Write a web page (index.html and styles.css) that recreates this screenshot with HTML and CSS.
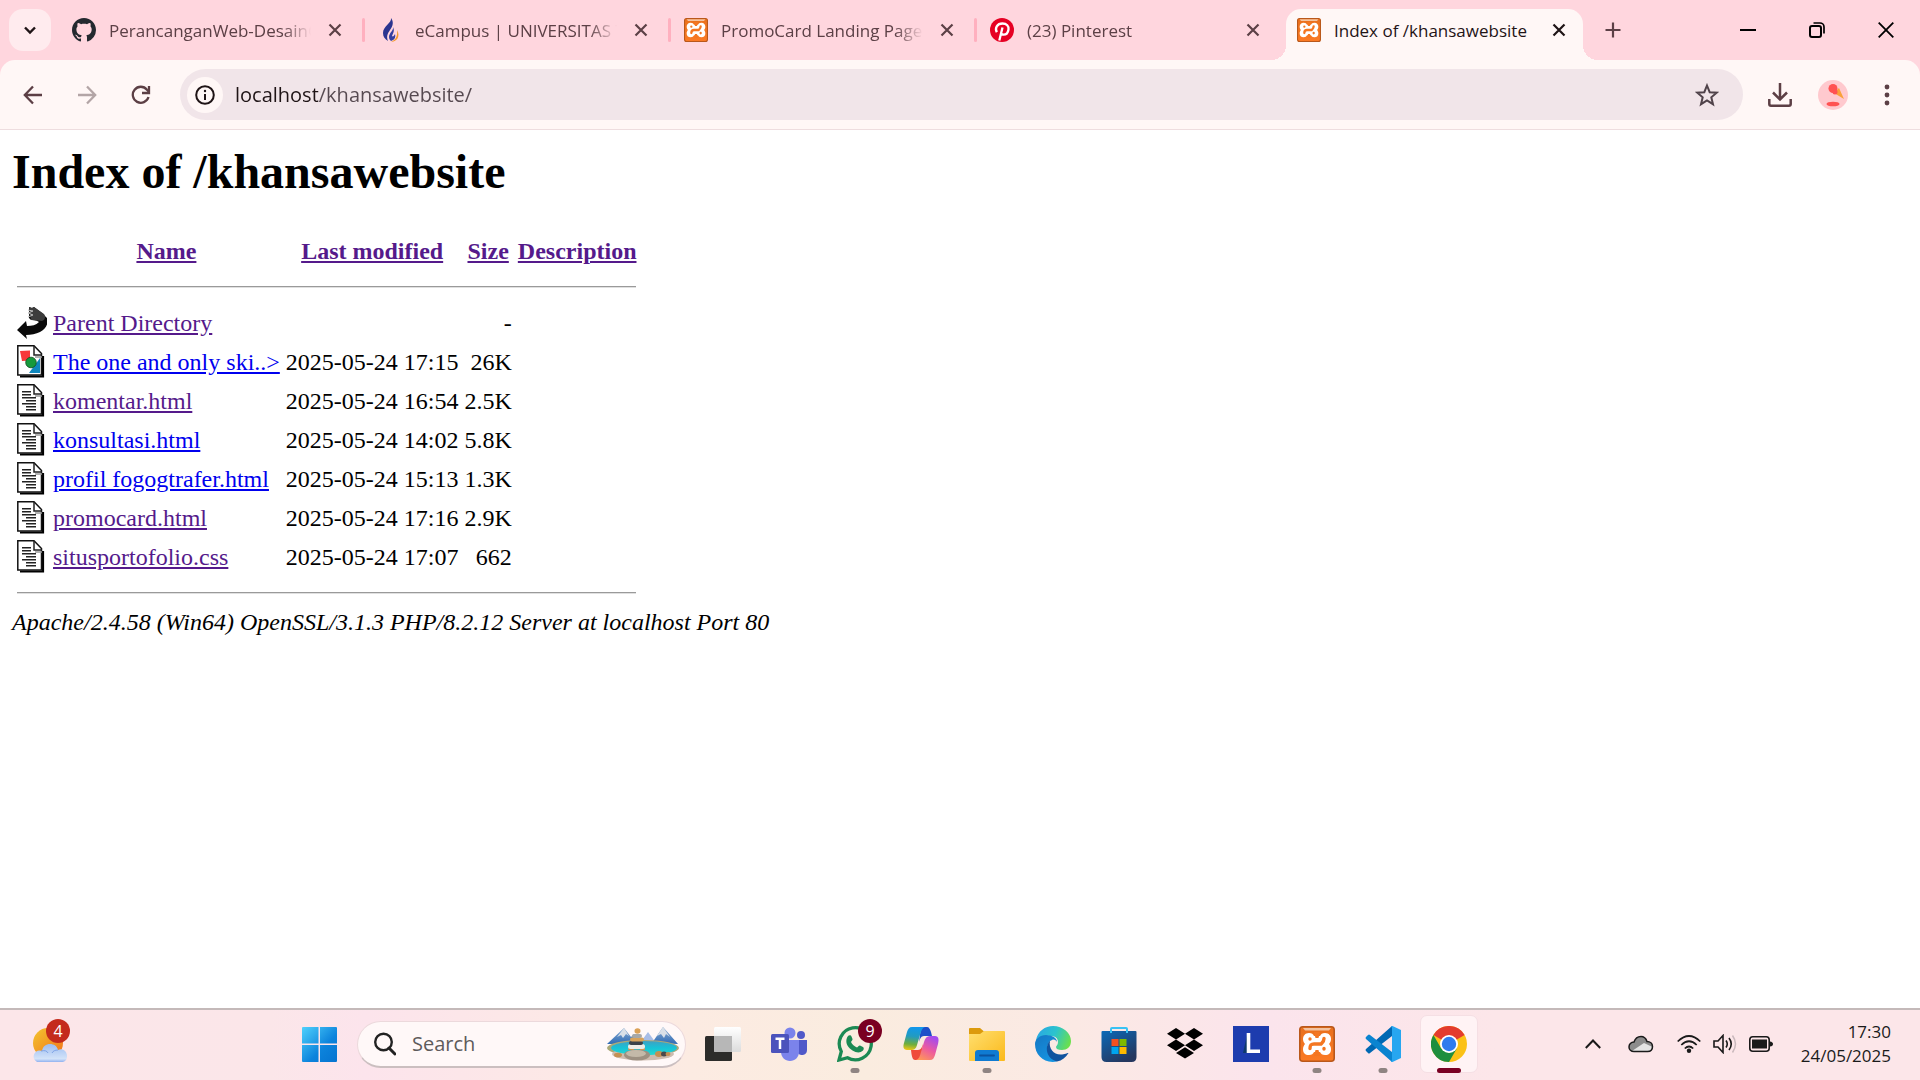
FILE: index.html
```html
<!DOCTYPE html>
<html lang="en">
<head>
<meta charset="utf-8">
<title>Index of /khansawebsite</title>
<link rel="stylesheet" href="styles.css">
</head>
<body>
<svg class="sprite" aria-hidden="true">
  <defs>
    <linearGradient id="xg" x1="0" y1="0" x2="0" y2="1"><stop offset="0" stop-color="#e9701d"/><stop offset="1" stop-color="#fb7a24"/></linearGradient>
  </defs>
  <symbol id="xampp" viewBox="0 0 36 36">
    <rect x=".8" y=".8" width="34.400" height="34.400" rx="3" fill="url(#xg)" stroke="#b9581b" stroke-width="1.600"/>
    <path d="M4 2h28l-2 2.500H6z" fill="#f3c3a0"/>
    <path d="M10 7c3 0 4 1 5 3h6c1-2 2-3 5-3 4 0 6 3 6 6 0 2-1 4-2 5 1 1 2 3 2 5 0 4-2 6-6 6-3 0-4-1-5-3h-6c-1 2-2 3-5 3-4 0-6-2-6-6 0-2 1-4 2-5-1-1-2-3-2-5 0-3 2-6 6-6z" fill="#fff"/>
    <path d="M15 6h6l-1.500 6h-3zM15 30h6l-1.500-6h-3z" fill="#f47621"/>
    <path d="M11 13v.1M25 12.500c0 3-1 3.500-3 5.500h-7c-3 0-4 1-4 4.500M25 22.500v.5" fill="none" stroke="#f47621" stroke-width="3.400" stroke-linecap="round"/>
  </symbol>
  <symbol id="close" viewBox="0 0 24 24">
    <path d="M6.500 6.500l11 11M17.500 6.500l-11 11" fill="none" stroke="currentColor" stroke-width="2.200"/>
  </symbol>
  <symbol id="doc" viewBox="0 0 30 33">
    <path d="M3 31.500h23V11" fill="none" stroke="#000" stroke-width="2.200"/>
    <path d="M.8.8h16.200L24.500 8.500V30H.8z" fill="#fff" stroke="#111" stroke-width="1.500"/>
    <path d="M17 1v9h8" fill="none" stroke="#222" stroke-width="1.500"/>
    <path d="M18 12h7" stroke="#999" stroke-width="1.500"/>
  </symbol>
  <symbol id="text" viewBox="0 0 30 33">
    <use href="#doc"/>
    <path d="M5 7.700h9M5 10.700h9M5 13.700h14M9 16.700h10M5 19.700h14M9 22.700h10M9 25.700h10" stroke="#222" stroke-width="1.500"/>
  </symbol>
</svg>

<header class="browser">
  <div class="tabstrip">
    <button class="tab-search" aria-label="Search tabs"><svg width="14" height="14" viewBox="0 0 14 14"><path d="M2 4.500l5 5 5-5" fill="none" stroke="#1f1416" stroke-width="2.400"/></svg></button>
    <nav class="tabs">
      <div class="tab">
        <svg class="favicon" viewBox="0 0 16 16"><path fill="#24292f" d="M8 0C3.580 0 0 3.580 0 8c0 3.540 2.290 6.530 5.470 7.590.4.070.55-.17.55-.38 0-.19-.01-.82-.01-1.490-2.010.37-2.530-.49-2.690-.94-.09-.23-.48-.94-.82-1.130-.28-.15-.68-.52-.01-.53.63-.01 1.080.58 1.230.82.72 1.210 1.870.87 2.330.66.07-.52.28-.87.51-1.070-1.780-.2-3.640-.89-3.640-3.950 0-.87.31-1.590.82-2.150-.08-.2-.36-1.020.08-2.120 0 0 .67-.21 2.200.82.64-.18 1.320-.27 2-.27s1.360.09 2 .27c1.530-1.040 2.200-.82 2.200-.82.44 1.100.16 1.920.08 2.120.51.56.82 1.270.82 2.150 0 3.070-1.870 3.750-3.650 3.950.29.25.54.73.54 1.480 0 1.070-.01 1.930-.01 2.200 0 .21.15.46.55.38A8.010 8.010 0 0 0 16 8c0-4.420-3.580-8-8-8z"/></svg>
        <a class="title" href="#">PerancanganWeb-DesainG</a>
        <button class="close" aria-label="Close tab"><svg><use href="#close"/></svg></button>
      </div>
      <div class="tab">
        <svg class="favicon" viewBox="0 0 24 24"><path d="M13 0c1 5-8 8-8 15 0 4 2 6 5 8-2-5 0-8 2-11 3-4 4-8 1-12z" fill="#2b3590"/><path d="M15 9c1 3-4 6-4 10 0 2 1 3 2 4 3-1 5-3 4-7-1 2-2 3-3 2 1-3 3-5 1-9z" fill="#3440a0"/><path d="M19 12c4 7-1 12-6 12 4-2 7-5 6-12z" fill="#f39a2b"/></svg>
        <a class="title" href="#">eCampus | UNIVERSITAS T</a>
        <button class="close" aria-label="Close tab"><svg><use href="#close"/></svg></button>
      </div>
      <div class="tab">
        <svg class="favicon"><use href="#xampp"/></svg>
        <a class="title" href="#">PromoCard Landing Page</a>
        <button class="close" aria-label="Close tab"><svg><use href="#close"/></svg></button>
      </div>
      <div class="tab last">
        <svg class="favicon" viewBox="0 0 24 24"><circle cx="12" cy="12" r="12" fill="#e60023"/><path d="M6.800 14.200C4.600 10.300 7 5.500 12.500 5.500c4.200 0 6.500 2.700 6 6-.5 3.300-2.600 5.200-4.900 5.200-1.500 0-2.400-1-2.500-1.700M12.500 9.500L9.300 22.500" fill="none" stroke="#fff" stroke-width="2.300"/></svg>
        <a class="title" href="#">(23) Pinterest</a>
        <button class="close" aria-label="Close tab"><svg><use href="#close"/></svg></button>
      </div>
      <div class="tab active">
        <svg class="favicon"><use href="#xampp"/></svg>
        <a class="title" href="#">Index of /khansawebsite</a>
        <button class="close" aria-label="Close tab"><svg><use href="#close"/></svg></button>
      </div>
      <button class="new-tab" aria-label="New tab"><svg width="18" height="18" viewBox="0 0 18 18"><path d="M9 1.500v15M1.500 9h15" stroke="#5c4046" stroke-width="2.200"/></svg></button>
    </nav>
    <div class="window-controls">
      <button aria-label="Minimize"><svg width="16" height="16" viewBox="0 0 16 16"><path d="M0 8h16" stroke="#000" stroke-width="2"/></svg></button>
      <button aria-label="Restore"><svg width="16" height="16" viewBox="0 0 16 16"><rect x="1" y="4" width="11" height="11" rx="2" fill="none" stroke="#000" stroke-width="2"/><path d="M4.500 1H11a4 4 0 0 1 4 4v6.500" fill="none" stroke="#000" stroke-width="1.700"/></svg></button>
      <button aria-label="Close window"><svg width="16" height="16" viewBox="0 0 16 16"><path d="M.7.700l14.600 14.600M15.300.700L.7 15.300" stroke="#000" stroke-width="1.800"/></svg></button>
    </div>
  </div>

  <div class="toolbar">
    <button class="nav-btn" aria-label="Back"><svg width="20" height="20" viewBox="0 0 20 20"><path d="M19 10H2M10 1.500L1.800 10l8.200 8.500" fill="none" stroke="#5c3f45" stroke-width="2.300"/></svg></button>
    <button class="nav-btn" aria-label="Forward"><svg width="20" height="20" viewBox="0 0 20 20"><path d="M1 10h17M10 1.500l8.200 8.500-8.200 8.500" fill="none" stroke="#b3a5a6" stroke-width="2.300"/></svg></button>
    <button class="nav-btn" aria-label="Reload"><svg width="20" height="20" viewBox="0 0 20 20"><path d="M17.500 12A8 8 0 1 1 16 4.700l2 2.300" fill="none" stroke="#5c3f45" stroke-width="2.300"/><path d="M18 1v7h-7" fill="none" stroke="#5c3f45" stroke-width="2.300"/></svg></button>
    <div class="omnibox">
      <button class="site-info" aria-label="Site information"><svg width="20" height="20" viewBox="0 0 20 20"><circle cx="10" cy="10" r="8.800" fill="none" stroke="#1f1416" stroke-width="2"/><path d="M10 9v6" stroke="#1f1416" stroke-width="2"/><circle cx="10" cy="6" r="1.200" fill="#1f1416"/></svg></button>
      <input class="address" type="text" aria-label="Address" value="localhost/khansawebsite/">
      <button class="star" aria-label="Bookmark this page"><svg width="24" height="24" viewBox="0 0 24 24"><path d="M12 2.500l2.700 6.700 7 .5-5.400 4.600 1.700 6.900-6-3.800-6 3.800 1.700-6.900-5.400-4.600 7-.5z" fill="none" stroke="#50434a" stroke-width="2"/></svg></button>
    </div>
    <button class="download" aria-label="Downloads"><svg width="24" height="24" viewBox="0 0 24 24"><path d="M12 0v16M5 9.500l7 7 7-7M1.300 16v5c0 1 .7 1.700 1.700 1.700h18c1 0 1.700-.7 1.700-1.700v-5" fill="none" stroke="#5c3f45" stroke-width="2.500"/></svg></button>
    <button class="profile" aria-label="Profile"><svg width="30" height="30" viewBox="0 0 30 30"><circle cx="15" cy="15" r="15" fill="#ffc9ce"/><path d="M16 13l5-5 5 11z" fill="#f9a13a"/><circle cx="15" cy="8.500" r="4.500" fill="#ff5252"/><circle cx="17" cy="12" r="2.500" fill="#ff5252"/><ellipse cx="15" cy="24" rx="6.500" ry="2.300" fill="#ff5252"/></svg></button>
    <button class="menu" aria-label="Menu"><svg width="6" height="22" viewBox="0 0 6 22"><g fill="#5c3f45"><circle cx="3" cy="3" r="2.400"/><circle cx="3" cy="11" r="2.400"/><circle cx="3" cy="19" r="2.400"/></g></svg></button>
  </div>
</header>

<main class="page">
  <h1>Index of /khansawebsite</h1>
  <table class="listing">
    <thead>
      <tr class="head"><th></th><th><a class="visited" href="#">Name</a></th><th><a class="visited" href="#">Last modified</a></th><th><a class="visited" href="#">Size</a></th><th><a class="visited" href="#">Description</a></th></tr>
      <tr><th colspan="5"><hr></th></tr>
    </thead>
    <tbody>
      <tr><td><svg class="file" viewBox="0 0 30 33"><path d="M12 1l3 1 2-1 8 6 5 5c2 5-1 11-7 14-4 2-9 3-14 3l1 4L0 24l9-9 1 5c5 0 9-1 12-4-3-2-6-2-8-2l-2-2z" fill="#0a0a0a"/><path d="M12 1l3 1 2-1 10 7c2 3 1 6-2 7-3 0-7-1-11-1z" fill="#3c3c3c"/><path d="M11 4l5 1-5 2 5 2-5 2" fill="none" stroke="#bbb" stroke-width="1"/></svg></td><td><a class="visited" href="#">Parent Directory</a></td><td></td><td class="num">-</td><td></td></tr>
      <tr><td><svg class="file" viewBox="0 0 30 33"><use href="#doc"/><path d="M3 6l10-.5v10L5 16z" fill="#f8383a"/><path d="M23 13v15H12z" fill="#0f87bd"/><circle cx="14" cy="17.500" r="5.300" fill="#169a3c" stroke="#124a20" stroke-width=".8"/></svg></td><td><a href="#">The one and only ski..&gt;</a></td><td class="num">2025-05-24 17:15</td><td class="num">26K</td><td></td></tr>
      <tr><td><svg class="file"><use href="#text"/></svg></td><td><a class="visited" href="#">komentar.html</a></td><td class="num">2025-05-24 16:54</td><td class="num">2.5K</td><td></td></tr>
      <tr><td><svg class="file"><use href="#text"/></svg></td><td><a href="#">konsultasi.html</a></td><td class="num">2025-05-24 14:02</td><td class="num">5.8K</td><td></td></tr>
      <tr><td><svg class="file"><use href="#text"/></svg></td><td><a href="#">profil fogogtrafer.html</a></td><td class="num">2025-05-24 15:13</td><td class="num">1.3K</td><td></td></tr>
      <tr><td><svg class="file"><use href="#text"/></svg></td><td><a class="visited" href="#">promocard.html</a></td><td class="num">2025-05-24 17:16</td><td class="num">2.9K</td><td></td></tr>
      <tr><td><svg class="file"><use href="#text"/></svg></td><td><a class="visited" href="#">situsportofolio.css</a></td><td class="num">2025-05-24 17:07</td><td class="num">662</td><td></td></tr>
      <tr class="foot"><th colspan="5"><hr></th></tr>
    </tbody>
  </table>
  <address>Apache/2.4.58 (Win64) OpenSSL/3.1.3 PHP/8.2.12 Server at localhost Port 80</address>
</main>

<footer class="taskbar">
  <div class="widgets">
    <button class="app" aria-label="Weather">
      <svg width="36" height="36" viewBox="0 0 36 36"><defs><linearGradient id="sun" x1="0" y1="0" x2="1" y2="1"><stop offset="0" stop-color="#f3c52f"/><stop offset="1" stop-color="#f1701a"/></linearGradient><linearGradient id="cl" x1="0" y1="0" x2="0" y2="1"><stop offset="0" stop-color="#9cbcf0"/><stop offset=".8" stop-color="#d3e3f9"/><stop offset="1" stop-color="#87aaee"/></linearGradient></defs><circle cx="17" cy="17" r="15" fill="url(#sun)"/><path d="M11 36a6 6 0 1 1 0-11c1-5 4-7 8-7s7 2 8 6c4-2 9 1 9 6 0 4-2 6-6 6z" fill="url(#cl)"/><path d="M10 25c4-1 6 0 7 2M27 24c-3 0-5 1-6 3" fill="none" stroke="#7fa3e6"/></svg>
      <span class="badge red">4</span>
    </button>
  </div>
  <nav class="apps">
    <button class="app" aria-label="Start"><svg width="36" height="36" viewBox="0 0 36 36"><defs><linearGradient id="win" gradientUnits="userSpaceOnUse" x1="1" y1="1" x2="36" y2="36"><stop offset="0" stop-color="#4fd1fc"/><stop offset=".6" stop-color="#0c83dc"/><stop offset="1" stop-color="#0574d0"/></linearGradient></defs><path d="M2 1h15.500v16.500H1V2q0-1 1-1zM19 1h16q1 0 1 1v15.500H19zM1 19h16.500v17H2q-1 0-1-1zM19 19h17v16q0 1-1 1H19z" fill="url(#win)"/></svg></button>
    <label class="search">
      <svg width="22" height="24" viewBox="0 0 22 24"><circle cx="9.500" cy="10" r="8.300" fill="none" stroke="#222" stroke-width="2.400"/><path d="M15 16l6 6" stroke="#222" stroke-width="3" stroke-linecap="round"/></svg>
      <input type="search" aria-label="Search" placeholder="Search">
      <svg width="74" height="36" viewBox="0 0 74 36">
        <defs><linearGradient id="mt" x1="0" y1="0" x2="0" y2="1"><stop offset="0" stop-color="#8fb0d3"/><stop offset="1" stop-color="#2f6bb5"/></linearGradient><linearGradient id="lk" x1="0" y1="0" x2="0" y2="1"><stop offset="0" stop-color="#3fa0c4"/><stop offset=".5" stop-color="#16c3d6"/><stop offset="1" stop-color="#28d6cf"/></linearGradient></defs>
        <path d="M34 17l8-11 8 11z" fill="#a8bde6"/><path d="M1 18L18 2l7 9 3-3 6 10zM46 17L57 1l15 17z" fill="url(#mt)"/><path d="M18 2l-7 9 4-2 2 3 3-4 3 2zM57 1l-6 9 4-2 3 4 2-4 4 3z" fill="#d9e0e8"/>
        <ellipse cx="37" cy="22" rx="36" ry="8" fill="#a9a878"/><ellipse cx="37" cy="28" rx="31" ry="6.500" fill="#cdbcb0"/><ellipse cx="38" cy="22" rx="33" ry="7" fill="url(#lk)"/>
        <ellipse cx="31" cy="29" rx="13" ry="5.500" fill="#9d9081"/><ellipse cx="30" cy="27.500" rx="10" ry="3.500" fill="#c4b9a8"/><path d="M22 24q0-3 3-3h3v3zM34 24v-3h3q2 0 2 3z" fill="#d19552"/><rect x="22" y="18" width="17" height="5" rx="2.500" fill="#f0ece6"/><rect x="23" y="15" width="14" height="4" rx="2" fill="#3c4149"/><rect x="24" y="11.500" width="14" height="4" rx="2" fill="#d9a35c"/><rect x="26" y="8" width="10" height="4" rx="2" fill="#a7a8a8"/><ellipse cx="31.500" cy="5" rx="3" ry="2.800" fill="#dba157"/>
        <ellipse cx="12" cy="29" rx="4" ry="2.300" fill="#c49053"/><ellipse cx="53" cy="28" rx="4" ry="3" fill="#c49053"/><ellipse cx="58" cy="28" rx="3" ry="2.500" fill="#4a4a4c"/><ellipse cx="62" cy="28" rx="2.500" ry="2" fill="#c49053"/>
      </svg>
    </label>
    <button class="app" aria-label="Task view"><svg width="36" height="36" viewBox="0 0 36 36"><defs><linearGradient id="tv" x1="0" y1="0" x2="0" y2="1"><stop offset="0" stop-color="#fff"/><stop offset="1" stop-color="#dcdcdc"/></linearGradient></defs><rect y="10" width="27" height="25" rx="1.500" fill="#2c2c2a"/><rect x="9" y="1" width="27" height="25" rx="1.500" fill="url(#tv)"/><path d="M9 10h18v16H10.500q-1.500 0-1.500-1.500z" fill="#b7b7b7"/></svg></button>
    <button class="app" aria-label="Teams"><svg width="36" height="36" viewBox="0 0 36 36"><circle cx="30" cy="9" r="4" fill="#5059c9"/><path d="M26 14h10v10c0 4-3 5-5 5s-5-1-5-5z" fill="#5059c9"/><circle cx="19" cy="7" r="5.500" fill="#7b83eb"/><path d="M10 14h18v12c0 5-4 9-9 9s-9-4-9-9z" fill="#7b83eb"/><rect y="8" width="18" height="19" rx="1.500" fill="#4b53bc"/><path d="M4.500 12.800h9M9 12.800V23" stroke="#fff" stroke-width="2.500"/></svg></button>
    <button class="app running" aria-label="WhatsApp"><svg width="36" height="36" viewBox="0 0 36 36"><path d="M2 34l2.300-8.500A16 16 0 1 1 10.500 31.700z" fill="none" stroke="#1b8a54" stroke-width="3.300"/><path d="M11 10c1-1 3-1 3.500.5l1 2.500c.3 1-1 2-1.500 3 1 2.500 3.500 4.500 6 5.500 1-.7 2-2.300 3-2l3 1.500c1.200.7.800 2.500 0 3.500-2 2-4.500 2.500-7.500 1.500-4-1.500-8-5-9-9-.5-2.500 0-5.500 1.500-7z" fill="#1b8a54"/></svg><span class="badge wine">9</span></button>
    <button class="app" aria-label="Copilot"><svg width="36" height="36" viewBox="0 0 36 36"><defs><linearGradient id="c1" x1=".4" y1="0" x2=".3" y2="1"><stop offset="0" stop-color="#1197ec"/><stop offset=".4" stop-color="#229bc0"/><stop offset=".75" stop-color="#70ae3c"/><stop offset="1" stop-color="#eec617"/></linearGradient><linearGradient id="c2" x1=".7" y1="0" x2=".2" y2="1"><stop offset="0" stop-color="#a24bf0"/><stop offset=".5" stop-color="#ec5aa0"/><stop offset="1" stop-color="#ff9856"/></linearGradient></defs><path d="M18 1h6c2 0 3 2 4 5l1 4h-8c-3 0-4 3-5 6z" fill="#1c4fc9"/><path d="M18 34h-6c-2 0-3-3-3.500-6L8 24h7c3 0 4-3 5-6z" fill="#ef4b3a"/><path d="M9 1h13c-3 1-4 4-5 8l-3 10c-1 4-3 5-6 5H4c-4 0-4-4-3-7l3-11c1-3 2-5 5-5z" fill="url(#c1)"/><path d="M27 34H13c3-1 4-4 5-8l3-10c1-4 3-6 6-6h5c4 0 4 4 3 8l-3 11c-1 3-2 5-5 5z" fill="url(#c2)"/></svg></button>
    <button class="app running" aria-label="File Explorer"><svg width="36" height="36" viewBox="0 0 36 36"><defs><linearGradient id="fo" x1="0" y1="0" x2="1" y2="1"><stop offset="0" stop-color="#ffdf70"/><stop offset="1" stop-color="#fbb91a"/></linearGradient></defs><path d="M0 3q0-1 1-1h10l4 3.500h20v6H0z" fill="#dc9a0c"/><path d="M0 8h11l4-3h20q1 0 1 1v28q0 1-1 1H1q-1 0-1-1z" fill="url(#fo)"/><path d="M6 35V27q0-3 3-3h18q3 0 3 3v8z" fill="#0f7bd2"/><path d="M11 29.500h14" stroke="#0b539f" stroke-width="1.800" stroke-linecap="round"/></svg></button>
    <button class="app" aria-label="Edge"><svg width="36" height="36" viewBox="0 0 36 36"><defs><linearGradient id="e1" x1="0" y1=".3" x2="1" y2=".6"><stop offset="0" stop-color="#29a8e4"/><stop offset=".5" stop-color="#2cc3cd"/><stop offset="1" stop-color="#6be04b"/></linearGradient><linearGradient id="e2" x1="0" y1="0" x2=".6" y2="1"><stop offset="0" stop-color="#1577c4"/><stop offset="1" stop-color="#1593e0"/></linearGradient></defs><path d="M1 14C3 5 10 0 18 0c10 0 18 7 18 15 0 6-4 9-9 9-4 0-6-1-6-3 0-1 2-2 2-5 0-4-3-6-8-6C8 9 2 13 1 18z" fill="url(#e1)"/><path d="M0 18c0-5 5-9 11-9 6 0 11 3 11 7-1-2-3-3-5-2-6 2-8 15 5 21.500C9 38 0 29 0 18z" fill="url(#e2)"/><path d="M15 15c-5 4-5 17 7 20.500 5-1 9-4 11.500-8.500-1-.5-3 1.500-8 1.500-7 0-12-6-10.500-13.500z" fill="#10539f"/></svg></button>
    <button class="app" aria-label="Microsoft Store"><svg width="36" height="36" viewBox="0 0 36 36"><defs><linearGradient id="st" x1="0" y1="0" x2=".6" y2="1"><stop offset="0" stop-color="#0a69b8"/><stop offset="1" stop-color="#25375f"/></linearGradient></defs><path d="M.5 6q0-1 1-1h33q1 0 1 1v25q0 5-5 5h-25q-5 0-5-5z" fill="url(#st)"/><path d="M10 7V3q0-1 1-1h14q1 0 1 1v4" fill="none" stroke="#38c2f4" stroke-width="2"/><path d="M10.500 13h7v7h-7z" fill="#f25022"/><path d="M18.500 13h7v7h-7z" fill="#7fba00"/><path d="M10.500 21h7v7h-7z" fill="#00a4ef"/><path d="M18.500 21h7v7h-7z" fill="#ffb900"/></svg></button>
    <button class="app" aria-label="Dropbox"><svg width="36" height="36" viewBox="0 0 36 36"><path d="M9 2l9 5.700-9 5.700-9-5.700zM27 2l9 5.700-9 5.700-9-5.700zM9 13.500l9 5.700-9 5.700-9-5.700zM27 13.500l9 5.700-9 5.700-9-5.700zM18 21.200l9 5.700-9 5.600-9-5.600z" fill="#000"/></svg></button>
    <button class="app" aria-label="L"><svg width="36" height="36" viewBox="0 0 36 36"><path d="M0 0h36v36H0z" fill="#1d3cae"/><path d="M14 9l-4 18h8z" fill="#0d3a6b"/><path d="M15.500 7v18.300H27" fill="none" stroke="#fff" stroke-width="3.600"/></svg></button>
    <button class="app running" aria-label="XAMPP"><svg width="36" height="36"><use href="#xampp"/></svg></button>
    <button class="app running" aria-label="Visual Studio Code"><svg width="36" height="36" viewBox="0 0 36 36"><path d="M27 0v10L5 27q-1 1-2 0l-2-2q-1-1 0-2z" fill="#0068b3"/><path d="M27 36V26L5 9Q4 8 3 9l-2 2q-1 1 0 2z" fill="#0a84d0"/><path d="M26 0h1.500L36 4v28l-8.500 4H26l1-2V2z" fill="#27a6f0"/></svg></button>
    <button class="app running current" aria-label="Google Chrome"><svg width="36" height="36" viewBox="0 0 36 36"><circle cx="18" cy="18" r="18" fill="#fbc116"/><path d="M18 18L2.400 9A18 18 0 0 1 33.600 9z" fill="#e33b2e"/><path d="M2.400 9l7.800 13.500 7.800 4.500 7.800-4.500L18 36A18 18 0 0 1 2.400 9z" fill="#1e8e3e"/><circle cx="18" cy="18" r="9" fill="#fff"/><circle cx="18" cy="18" r="7.200" fill="#2f7bee"/></svg></button>
  </nav>
  <div class="tray">
    <button aria-label="Show hidden icons"><svg width="16" height="10" viewBox="0 0 16 10"><path d="M.8 9L8 1.500 15.200 9" fill="none" stroke="#1a1a1a" stroke-width="2"/></svg></button>
    <button aria-label="OneDrive"><svg width="26" height="18" viewBox="0 0 26 18"><path d="M6 16.500c-3 0-5-2-5-4.500C1 9.500 3 7 6 7c1-3 3-5.500 7-5.500 3 0 5 2 6 5 3 0 5.500 2 5.500 5s-2 5-5 5z" fill="#8c8c8c"/><path d="M4 16l12-8 8.500 4c0 3-2 4.500-5 4.500H6z" fill="#e4e4e4"/><path d="M6 16.500c-3 0-5-2-5-4.500C1 9.500 3 7 6 7c1-3 3-5.500 7-5.500 3 0 5 2 6 5 3 0 5.500 2 5.500 5s-2 5-5 5z" fill="none" stroke="#1a1a1a" stroke-width="1.500"/></svg></button>
    <button class="status" aria-label="Network, volume and battery">
      <svg width="24" height="18" viewBox="0 0 24 18"><g fill="none" stroke="#1a1a1a" stroke-width="1.700"><path d="M.7 6.500q11.300-11 22.600 0"/><path d="M4.300 10q7.700-7.500 15.400 0"/><path d="M7.800 13.500q4.200-4 8.400 0"/></g><circle cx="12" cy="15.700" r="2.200" fill="#1a1a1a"/></svg>
      <svg width="24" height="20" viewBox="0 0 24 20"><path d="M1 7h4l5-5.500v17L5 13H1z" fill="none" stroke="#1a1a1a" stroke-width="1.600"/><path d="M13 6.500q2.500 3.500 0 7M16 4q4.500 6 0 12" fill="none" stroke="#1a1a1a" stroke-width="1.600"/><path d="M19.500 1.500q6 8.500 0 17" fill="none" stroke="#c9b8bc" stroke-width="1.500"/></svg>
      <svg width="24" height="16" viewBox="0 0 24 16"><rect x=".8" y=".8" width="19.400" height="14.400" rx="3" fill="none" stroke="#1a1a1a" stroke-width="1.600"/><rect x="3" y="3.500" width="15" height="9" fill="#1a1a1a"/><path d="M21 5.500q3 .5 3 2.500t-3 2.500z" fill="#1a1a1a"/></svg>
    </button>
    <button class="clock"><time>17:30</time><time>24/05/2025</time></button>
  </div>
</footer>
</body>
</html>
```
FILE: styles.css
```css
* { box-sizing: border-box; }

body {
  margin: 0;
  min-height: 100vh;
  display: flex;
  flex-direction: column;
  background: #fff;
  font-family: "Open Sans", "Noto Sans", sans-serif;
}

button {
  margin: 0;
  padding: 0;
  border: 0;
  background: none;
  font: inherit;
  color: inherit;
  display: flex;
  align-items: center;
  justify-content: center;
  flex: none;
}

svg { display: block; flex: none; }
.sprite { position: absolute; width: 0; height: 0; }

/* Tab strip */
.browser { background: #ffd6de; }

.tabstrip {
  display: flex;
  height: 60px;
  padding-left: 9px;
}

.tab-search {
  width: 42px;
  height: 42px;
  margin-top: 9px;
  border-radius: 14px;
  background: #ffebee;
}

.tabs {
  display: flex;
  flex: 1;
  min-width: 0;
  padding-left: 8px;
}

.tab {
  display: flex;
  align-items: center;
  flex: 0 1 306px;
  min-width: 0;
  height: 60px;
  padding: 0 18px 0 13px;
  color: #5c4046;
  position: relative;
}

.tab:not(.last):not(.active)::after {
  content: "";
  position: absolute;
  right: 0;
  top: 18px;
  width: 3px;
  height: 24px;
  border-radius: 2px;
  background: #ffb0bf;
}

.favicon { width: 24px; height: 24px; }

.title {
  flex: 1;
  min-width: 0;
  margin: 0 12px 0 13px;
  padding-top: 2px;
  overflow: hidden;
  white-space: nowrap;
  font-size: 17px;
  line-height: 24px;
  color: inherit;
  text-decoration: none;
  -webkit-mask-image: linear-gradient(to left, transparent, #000 28px);
  mask-image: linear-gradient(to left, transparent, #000 28px);
}

.close, .close svg { width: 24px; height: 24px; }

.tab.active {
  flex-basis: 297px;
  height: 51px;
  margin: 9px 0 0 3px;
  padding: 0 12px 9px 11px;
  border-radius: 15px 15px 0 0;
  background: #fff7f6;
  color: #1f1416;
}

.active .title {
  -webkit-mask-image: none;
  mask-image: none;
}

.tab.active::before,
.tab.active::after {
  content: "";
  position: absolute;
  bottom: 0;
  width: 15px;
  height: 15px;
}

.tab.active::before {
  right: 100%;
  background: radial-gradient(circle at 0 0, transparent 15px, #fff7f6 15px);
}

.tab.active::after {
  left: 100%;
  background: radial-gradient(circle at 100% 0, transparent 15px, #fff7f6 15px);
}

.new-tab { width: 60px; height: 60px; }

.window-controls { display: flex; }
.window-controls button { width: 69px; height: 60px; }

/* Toolbar */
.toolbar {
  display: flex;
  align-items: center;
  height: 70px;
  padding: 0 18px 0 6px;
  border-bottom: 1px solid #eedddf;
  border-radius: 15px 15px 0 0;
  background: #fff7f6;
}

.nav-btn { width: 54px; height: 50px; }

.omnibox {
  display: flex;
  align-items: center;
  flex: 1;
  min-width: 0;
  height: 51px;
  margin-left: 12px;
  padding: 0 24px 0 7px;
  border-radius: 26px;
  background: #f1e5e9;
}

.site-info {
  width: 36px;
  height: 36px;
  border-radius: 50%;
  background: #fff7f6;
}

.address {
  flex: 1;
  min-width: 0;
  margin: 0 12px;
  padding: 0;
  border: 0;
  outline: 0;
  font: 20px/28px "Open Sans", "Noto Sans", sans-serif;
  background: linear-gradient(to right, #1f1416 83px, #564950 83px);
  -webkit-background-clip: text;
  background-clip: text;
  -webkit-text-fill-color: transparent;
}

.download { width: 48px; height: 48px; margin-left: 13px; }
.profile { width: 48px; height: 48px; margin-left: 5px; }
.menu { width: 30px; height: 48px; margin-left: 15px; }

/* Directory listing */
.page {
  flex: 1;
  padding: 14px 12px;
  color: #000;
  font: 24px/28px "Liberation Serif", "Times New Roman", serif;
}

h1 {
  margin: 0 0 30px;
  font-size: 48px;
  line-height: 55px;
}

.listing {
  border-collapse: separate;
  border-spacing: 4px;
}

.listing th,
.listing td {
  padding: 1px;
  white-space: nowrap;
}

.listing .head th { height: 35px; }
.listing .num { text-align: right; }
.listing a { color: #00e; text-decoration: underline; }
.listing a.visited { color: #551a8b; }
.file { width: 30px; height: 33px; }

hr {
  margin: 13px 0 12px;
  border: 0;
  border-top: 1px solid #9a9a9a;
  border-bottom: 1px solid #e0e0e0;
}

.foot hr { margin-bottom: 9px; }

address { font-style: italic; }

/* Taskbar */
.taskbar {
  display: flex;
  height: 72px;
  border-top: 2px solid #c4b9b9;
  background: linear-gradient(to right, #fce6e9 0, #fbe6e9 14%, #fce4ec 19%, #fcebe2 36%, #faecdf 45%, #fbe9e4 56%, #fbe4ec 66%, #fce6e9 78%);
}

.widgets {
  flex: 0 0 286px;
  padding-left: 16px;
}

.app {
  width: 66px;
  height: 68px;
  position: relative;
}

.badge {
  position: absolute;
  left: 36px;
  top: 9px;
  width: 24px;
  height: 24px;
  border-radius: 50%;
  color: #fff;
  font-size: 16px;
  line-height: 24px;
  text-align: center;
}

.badge.red { background: #c42b1c; left: 30px; }
.badge.wine { background: #7a0022; }

.apps { display: flex; min-width: 0; }

.search {
  display: flex;
  align-items: center;
  flex: 0 1 329px;
  min-width: 0;
  height: 47px;
  margin: 11px 4px 0 5px;
  padding: 0 5px 0 16px;
  border: 1px solid #ecd9dc;
  border-bottom: 2px solid #cbbfc0;
  border-radius: 24px;
  background: #fff8f8;
}

.search input {
  flex: 1;
  min-width: 0;
  margin: 0 0 0 16px;
  padding: 0;
  border: 0;
  outline: 0;
  background: none;
  font: 20px/28px "Open Sans", "Noto Sans", sans-serif;
}

.search input::placeholder { color: #5d5b5b; opacity: 1; }

.running::after {
  content: "";
  position: absolute;
  left: 50%;
  bottom: 5px;
  width: 9px;
  height: 5px;
  border-radius: 3px;
  background: #8f8482;
  transform: translateX(-50%);
}

.current::before {
  content: "";
  position: absolute;
  left: 4px;
  right: 4px;
  top: 5px;
  bottom: 5px;
  border: 1px solid #f5dfe4;
  border-radius: 7px;
  background: #fff3f5;
}

.current svg { position: relative; }
.current::after { width: 24px; background: #7a0022; }

.tray {
  display: flex;
  align-items: flex-start;
  margin-left: auto;
  padding-right: 29px;
}

.tray button { height: 68px; width: 48px; }
.tray .status { width: 108px; margin-left: 6px; gap: 12px; }

.tray .clock {
  flex-direction: column;
  align-items: flex-end;
  width: 112px;
  color: #1a1a1a;
  font-size: 17px;
  line-height: 24px;
}
```
